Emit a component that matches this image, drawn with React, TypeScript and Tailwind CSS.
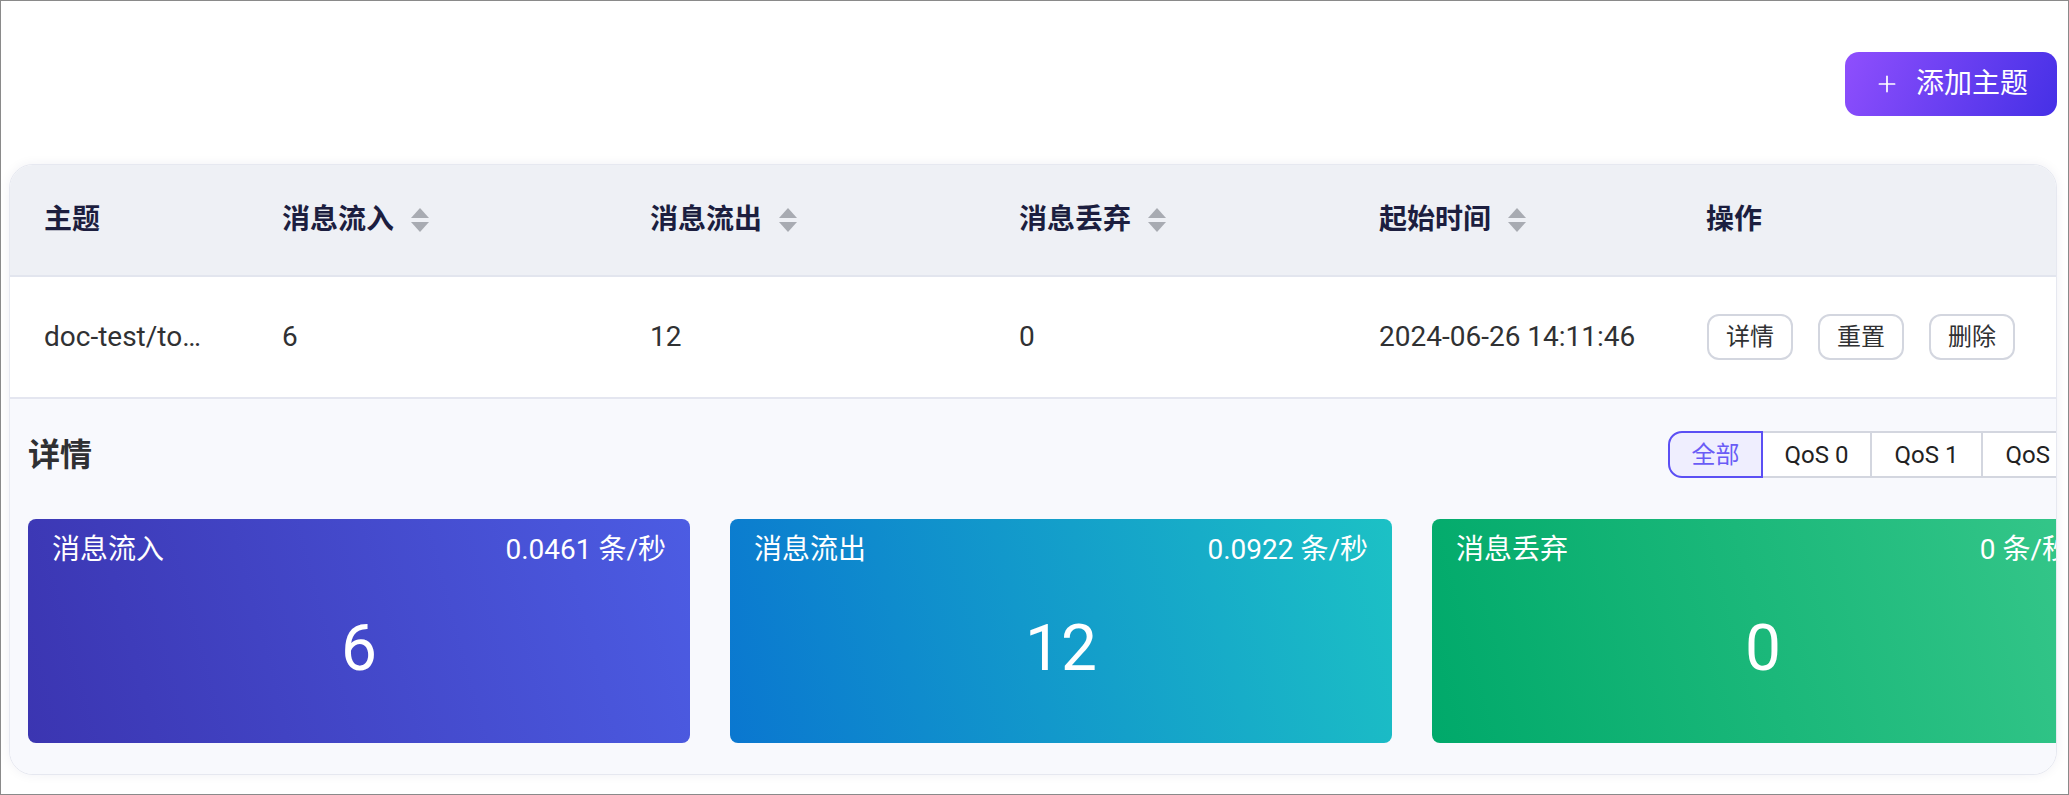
import { Plus } from "lucide-react";

const columns = [
  { title: "主题", sort: false },
  { title: "消息流入", sort: true },
  { title: "消息流出", sort: true },
  { title: "消息丢弃", sort: true },
  { title: "起始时间", sort: true },
  { title: "操作", sort: false },
];

const row = ["doc-test/to…", "6", "12", "0", "2024-06-26 14:11:46"];

const stats = [
  { label: "消息流入", rate: "0.0461 条/秒", value: "6", bg: "bg-[linear-gradient(75deg,#3b35b1_0%,#4c5ce3_100%)]" },
  { label: "消息流出", rate: "0.0922 条/秒", value: "12", bg: "bg-[linear-gradient(75deg,#0a77d0_0%,#1cc1c5_100%)]" },
  { label: "消息丢弃", rate: "0 条/秒", value: "0", bg: "bg-[linear-gradient(75deg,#00a96a_0%,#36c78a_100%)]" },
];

function SortIcon() {
  return (
    <svg width="20" height="25" viewBox="0 0 20 25" className="ml-4 shrink-0">
      <path d="M10 0 L19 10 H1 Z" fill="#a8abb2" />
      <path d="M1 14 H19 L10 24 Z" fill="#a8abb2" />
    </svg>
  );
}

export default function App() {
  return (
    <div className="w-full h-[795px] border border-[#8a8a8a] bg-white pl-2 pr-[11px] pt-[51px] font-['Roboto','Noto_Sans_CJK_SC',sans-serif]">
      {/* toolbar */}
      <div className="flex justify-end">
        <button className="flex items-center justify-center gap-4 w-[212px] h-[64px] rounded-[14px] bg-[linear-gradient(115deg,#8f4ffd_0%,#4530e6_100%)] text-white text-[28px]">
          <Plus size={26} strokeWidth={1.6} />
          <span>添加主题</span>
        </button>
      </div>

      {/* table card */}
      <div className="mt-12 rounded-[24px] border border-[#e6e8f0] overflow-hidden bg-white shadow-[0_0_12px_rgba(20,30,80,0.06)]">
        <div className="grid grid-cols-[238px_368px_369px_360px_327px_1fr] h-[112px] bg-[#eef0f5] border-b-2 border-[#e2e5ee] items-center">
          {columns.map((c) => (
            <div key={c.title} className="flex items-center pl-[34px] text-[28px] font-bold text-[#1c1e3f]">
              <span>{c.title}</span>
              {c.sort && <SortIcon />}
            </div>
          ))}
        </div>
        <div className="grid grid-cols-[238px_368px_369px_360px_327px_1fr] h-[122px] border-b-2 border-[#e4e6f0] items-center text-[28px] text-[#303133]">
          {row.map((v, i) => (
            <div key={i} className="pl-[34px] whitespace-nowrap">
              {v}
            </div>
          ))}
          <div className="pl-[35px] flex gap-[25px]">
            {["详情", "重置", "删除"].map((b) => (
              <button
                key={b}
                className="w-[86px] h-[46px] rounded-[12px] border-2 border-[#d3d6df] bg-white text-[24px] text-[#303133]"
              >
                {b}
              </button>
            ))}
          </div>
        </div>

        {/* details */}
        <div className="bg-[#f8f9fd] pl-[18px] pt-8 pb-[31px]">
          <div className="w-[2066px]">
            <div className="flex items-center justify-between h-[47px]">
              <h3 className="text-[32px] font-bold text-[#2f3033]">详情</h3>
              <div className="flex h-[47px] text-[24px]">
                <div className="w-[95px] flex items-center justify-center rounded-l-[14px] border-2 border-[#5b4ff4] bg-[#efeefe] text-[#6a5cf6]">
                  全部
                </div>
                <div className="w-[109px] flex items-center justify-center border-y-2 border-r-2 border-[#d3d6df] bg-white text-[#222]">
                  QoS 0
                </div>
                <div className="w-[111px] flex items-center justify-center border-y-2 border-r-2 border-[#d3d6df] bg-white text-[#222]">
                  QoS 1
                </div>
                <div className="w-[111px] flex items-center justify-center border-y-2 border-r-2 rounded-r-[14px] border-[#d3d6df] bg-white text-[#222]">
                  QoS 2
                </div>
              </div>
            </div>
            <div className="grid grid-cols-3 gap-10 mt-[41px]">
              {stats.map((s) => (
                <div key={s.label} className={`${s.bg} h-[224px] rounded-[8px] px-6 pt-[10px] pb-4 flex flex-col text-white`}>
                  <div className="flex justify-between text-[28px] leading-[42px]">
                    <span>{s.label}</span>
                    <span>{s.rate}</span>
                  </div>
                  <div className="flex-1 flex items-center justify-center text-[64px] leading-none">{s.value}</div>
                </div>
              ))}
            </div>
          </div>
        </div>
      </div>
    </div>
  );
}
